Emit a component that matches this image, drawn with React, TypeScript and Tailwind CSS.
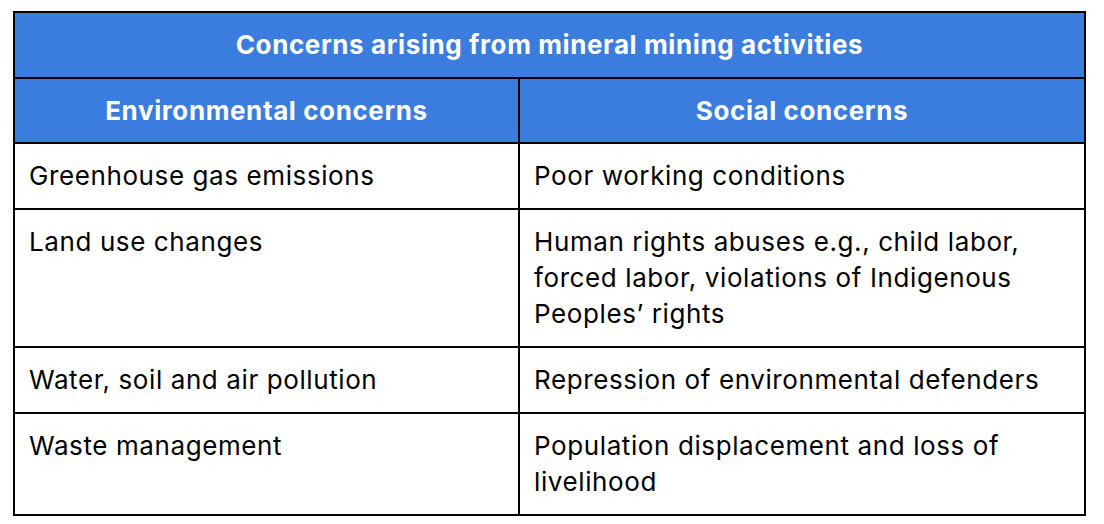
const rows: [string, string][] = [
  ['Greenhouse gas emissions', 'Poor working conditions'],
  [
    'Land use changes',
    'Human rights abuses e.g., child labor, forced labor, violations of Indigenous Peoples\u2019 rights',
  ],
  ['Water, soil and air pollution', 'Repression of environmental defenders'],
  ['Waste management', 'Population displacement and loss of livelihood'],
]

export default function App() {
  return (
    <div className="min-h-[524px] w-[1104px] bg-white pl-[13px] pt-[11px] font-['Inter',sans-serif]">
      <div className="w-[1073px] border-2 border-black text-[26px] leading-[36px] tracking-[0.6px]">
        <div className="flex h-[64px] items-center justify-center bg-[#3a7ddf] font-bold text-white">
          Concerns arising from mineral mining activities
        </div>
        <div className="grid grid-cols-[503px_566px] border-t-2 border-black bg-[#3a7ddf] font-bold text-white">
          <div className="flex h-[63px] items-center justify-center">Environmental concerns</div>
          <div className="flex h-[63px] items-center justify-center border-l-2 border-black">
            Social concerns
          </div>
        </div>
        {rows.map(([env, soc]) => (
          <div key={env} className="grid grid-cols-[503px_566px] border-t-2 border-black text-black">
            <div className="px-[14px] py-[14px]">{env}</div>
            <div className="border-l-2 border-black py-[14px] pl-[14px] pr-[20px]">{soc}</div>
          </div>
        ))}
      </div>
    </div>
  )
}
